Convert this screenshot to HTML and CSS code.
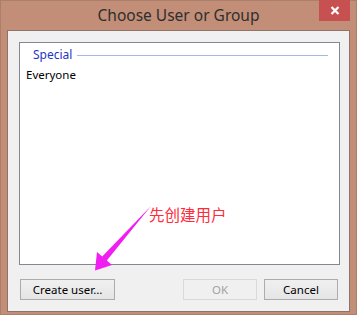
FILE: index.html
```html
<!DOCTYPE html>
<html>
<head>
<meta charset="utf-8">
<link rel="stylesheet" href="styles.css">
</head>
<body>
<div class="window">
  <div class="titlebar">
    <span class="title">Choose User or Group</span>
    <div class="close">
      <svg width="10" height="9" viewBox="0 0 10 9"><path d="M1.5 1 L8.5 8 M8.5 1 L1.5 8" stroke="#fff" stroke-width="2.2" fill="none"/></svg>
    </div>
  </div>
  <div class="client">
    <div class="listbox">
      <div class="group-header">
        <span class="group-name">Special</span>
        <span class="group-line"></span>
      </div>
      <div class="item">Everyone</div>
    </div>
    <div class="buttons">
      <button class="btn btn-create">Create user…</button>
      <span class="spacer"></span>
      <button class="btn btn-ok" disabled>OK</button>
      <button class="btn btn-cancel">Cancel</button>
    </div>
  </div>
  <div class="note">先创建用户</div>
  <svg class="arrow" width="357" height="315" viewBox="0 0 357 315">
    <polygon points="151,206 106.8,260.5 112,265 95,270.5 97,252 102.2,256.5" fill="#f01ef0"/>
  </svg>
</div>
</body>
</html>
```
FILE: styles.css
```css
html, body {
  margin: 0;
  padding: 0;
}
body {
  width: 357px;
  height: 315px;
  overflow: hidden;
  font-family: "Noto Sans", "Open Sans", sans-serif;
}
.window {
  position: relative;
  box-sizing: border-box;
  width: 357px;
  height: 315px;
  background: #c28e78;
  border: 1px solid #ab7f6c;
  padding: 0 6px 6px 6px;
  display: flex;
  flex-direction: column;
}
.titlebar {
  height: 29px;
  display: flex;
  align-items: center;
  justify-content: center;
  flex: none;
}
.title {
  font-family: "Noto Sans", sans-serif;
  font-size: 15.5px;
  color: #2e2e2e;
  margin-top: -1px;
}
.close {
  position: absolute;
  top: -1px;
  right: 6px;
  width: 31px;
  height: 21px;
  background: #c75050;
  display: flex;
  align-items: center;
  justify-content: center;
}
.client {
  flex: 1;
  border: 1px solid #8e7468;
  background: #f0f0f0;
  padding: 11px 9px 11px 11px;
  display: flex;
  flex-direction: column;
}
.listbox {
  height: 216px;
  border: 1px solid #828790;
  background: #fff;
  padding: 5px 11px 0 6px;
}
.group-header {
  display: flex;
  align-items: center;
  padding-left: 7px;
  height: 14px;
}
.group-name {
  font-size: 12px;
  color: #1f35c8;
  line-height: 14px;
}
.group-line {
  flex: 1;
  height: 1px;
  background: #a3b8ea;
  margin-left: 5px;
  margin-top: 1px;
}
.item {
  font-size: 11.5px;
  color: #000;
  margin-top: 5px;
  line-height: 16px;
}
.buttons {
  display: flex;
  margin-top: 14px;
  padding: 0 2px 0 1px;
}
.spacer {
  flex: 1;
}
.btn {
  box-sizing: border-box;
  height: 21px;
  font-family: "Noto Sans", sans-serif;
  font-size: 11.5px;
  border: 1px solid #acacac;
  background: linear-gradient(#f0f0f0, #e5e5e5);
  color: #000;
  padding: 0;
  margin: 0;
  line-height: 17px;
}
.btn-create {
  width: 95px;
}
.btn-ok {
  width: 74px;
  color: #a3a3a3;
  border-color: #d9d9d9;
  background: #f0f0f0;
}
.btn-cancel {
  width: 74px;
  margin-left: 7px;
}
.note {
  position: absolute;
  left: 148px;
  top: 203px;
  font-family: "Noto Sans CJK SC", sans-serif;
  font-size: 15.5px;
  line-height: 20px;
  color: #ff2b3a;
}
.arrow {
  position: absolute;
  left: -1px;
  top: -1px;
  pointer-events: none;
}
```
